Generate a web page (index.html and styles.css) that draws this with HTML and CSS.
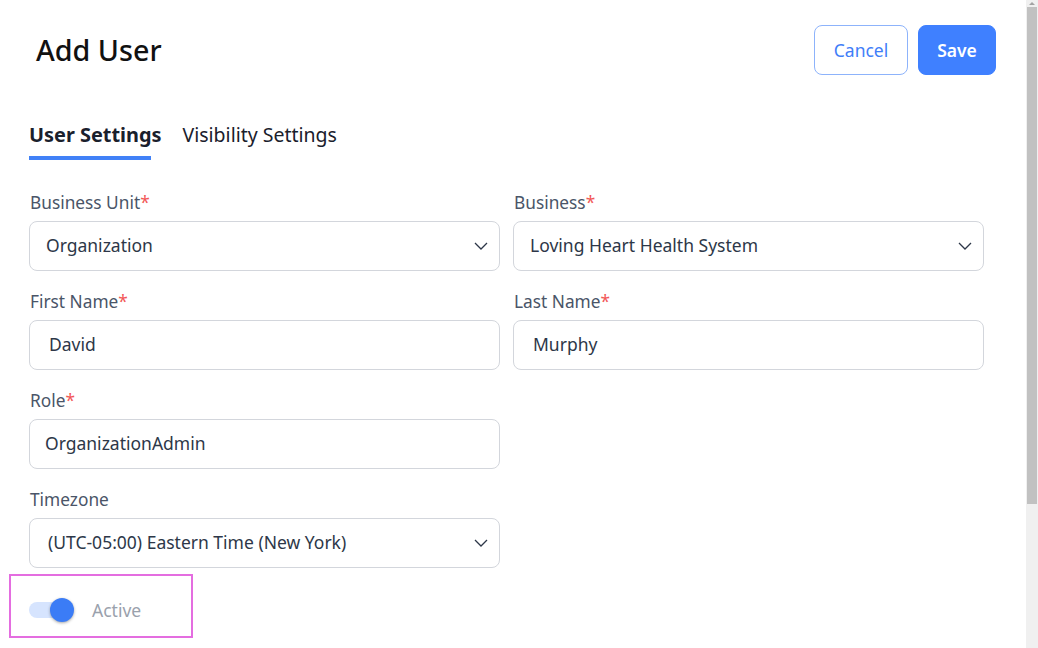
FILE: index.html
```html
<!DOCTYPE html>
<html lang="en">
<head>
<meta charset="utf-8">
<title>Add User</title>
<link rel="stylesheet" href="styles.css">
</head>
<body>
<div class="app">
  <main class="page">
    <header class="header">
      <h1 class="title">Add User</h1>
      <div class="actions">
        <button class="btn btn-outline">Cancel</button>
        <button class="btn btn-primary">Save</button>
      </div>
    </header>

    <nav class="tabs">
      <div class="tab tab-active">
        <span class="tab-text">User Settings</span>
        <span class="tab-bar"></span>
      </div>
      <div class="tab">
        <span class="tab-text">Visibility Settings</span>
      </div>
    </nav>

    <form class="form">
      <div class="field">
        <label class="label">Business Unit<span class="req">*</span></label>
        <div class="control select">
          <span class="value">Organization</span>
          <svg class="chev" width="14" height="8" viewBox="0 0 14 8"><polyline points="1,1 7,7 13,1" fill="none" stroke="#2d3748" stroke-width="1.3"/></svg>
        </div>
      </div>
      <div class="field">
        <label class="label">Business<span class="req">*</span></label>
        <div class="control select">
          <span class="value">Loving Heart Health System</span>
          <svg class="chev" width="14" height="8" viewBox="0 0 14 8"><polyline points="1,1 7,7 13,1" fill="none" stroke="#2d3748" stroke-width="1.3"/></svg>
        </div>
      </div>
      <div class="field">
        <label class="label">First Name<span class="req">*</span></label>
        <div class="control text-in"><span class="value">David</span></div>
      </div>
      <div class="field">
        <label class="label">Last Name<span class="req">*</span></label>
        <div class="control text-in"><span class="value">Murphy</span></div>
      </div>
      <div class="field">
        <label class="label">Role<span class="req">*</span></label>
        <div class="control"><span class="value">OrganizationAdmin</span></div>
      </div>
      <div class="field empty"></div>
      <div class="field">
        <label class="label">Timezone</label>
        <div class="control select tz">
          <span class="value">(UTC-05:00) Eastern Time (New York)</span>
          <svg class="chev" width="14" height="8" viewBox="0 0 14 8"><polyline points="1,1 7,7 13,1" fill="none" stroke="#2d3748" stroke-width="1.3"/></svg>
        </div>
      </div>
    </form>

    <div class="active-box">
      <div class="toggle">
        <span class="track"></span>
        <span class="knob"></span>
      </div>
      <span class="active-label">Active</span>
    </div>
  </main>
  <div class="scrollbar">
    <div class="sb-arrow"></div>
    <div class="sb-thumb"></div>
  </div>
</div>
</body>
</html>
```

FILE: styles.css
```css
* { box-sizing: border-box; }
html, body { margin: 0; padding: 0; background: #fff; }
body {
  font-family: "Noto Sans", "Open Sans", "DejaVu Sans", sans-serif;
  color: #1a202c;
  overflow: hidden;
}
.app {
  display: flex;
  height: 648px;
}
.page {
  flex: 1;
  padding: 25px 30px 0 29px;
}
.header {
  display: flex;
  justify-content: space-between;
  align-items: center;
  height: 50px;
}
.title {
  margin: 0 0 0 7px;
  font-size: 28.7px;
  font-weight: 500;
  line-height: 1;
  color: #111;
}
.actions {
  display: flex;
  gap: 10px;
}
.btn {
  font-family: inherit;
  font-size: 17.5px;
  height: 50px;
  border-radius: 8px;
  cursor: pointer;
}
.btn-outline {
  width: 94px;
  background: #fff;
  border: 1px solid #8db3fb;
  color: #3f7ef8;
}
.btn-primary {
  width: 78px;
  background: #3f80ff;
  border: 1px solid #3f80ff;
  color: #fff;
  font-weight: 600;
}
.tabs {
  display: flex;
  gap: 21px;
  margin-top: 35px;
}
.tab {
  display: flex;
  flex-direction: column;
  padding-top: 12px;
}
.tab-text {
  font-size: 19.5px;
  line-height: 26px;
  color: #1a202c;
}
.tab-active .tab-text { font-weight: 700; font-size: 19.9px; }
.tab-bar {
  display: block;
  width: 122px;
  height: 4px;
  margin-top: 8px;
  background: #4181f7;
}
.form {
  display: grid;
  grid-template-columns: 471px 471px;
  column-gap: 13px;
  row-gap: 19px;
  margin-top: 31px;
}
.field {
  display: flex;
  flex-direction: column;
  gap: 6px;
}
.label {
  font-size: 17.3px;
  line-height: 24px;
  color: #4a5568;
  padding-left: 1px;
}
.req { color: #f25757; }
.control {
  height: 50px;
  border: 1px solid #d3d6dc;
  border-radius: 8px;
  display: flex;
  align-items: center;
  justify-content: space-between;
  padding: 0 11px 0 15px;
  font-size: 17.5px;
  line-height: 24px;
  color: #2d3748;
}
.value { margin-top: -3px; }
.select { padding-left: 16px; }
.tz { padding-left: 18px; }
.text-in { padding-left: 19px; }
.chev { flex: none; }
.active-box {
  margin: 6px 0 0 -20px;
  width: 184px;
  height: 64px;
  border: 2px solid #e46de0;
  display: flex;
  align-items: center;
  padding-left: 18px;
  padding-top: 8px;
}
.toggle {
  display: flex;
  align-items: center;
}
.track {
  width: 34px;
  height: 16px;
  border-radius: 8px;
  background: #d6e4fe;
}
.knob {
  width: 24px;
  height: 24px;
  border-radius: 50%;
  background: #3b7cf6;
  margin-left: -13px;
  box-shadow: 0 1px 3px rgba(0, 0, 0, 0.35);
}
.active-label {
  margin-left: 18px;
  font-size: 17.5px;
  color: #9aa1ac;
}
.scrollbar {
  width: 12px;
  flex: none;
  background: #f0f0f0;
  display: flex;
  flex-direction: column;
  align-items: center;
}
.sb-arrow {
  width: 0;
  height: 0;
  margin-top: 2px;
  border-left: 3px solid transparent;
  border-right: 3px solid transparent;
  border-bottom: 3px solid #a3a3a3;
}
.sb-thumb {
  width: 10px;
  height: 497px;
  margin-top: 2px;
  background: #c1c1c1;
}
```
